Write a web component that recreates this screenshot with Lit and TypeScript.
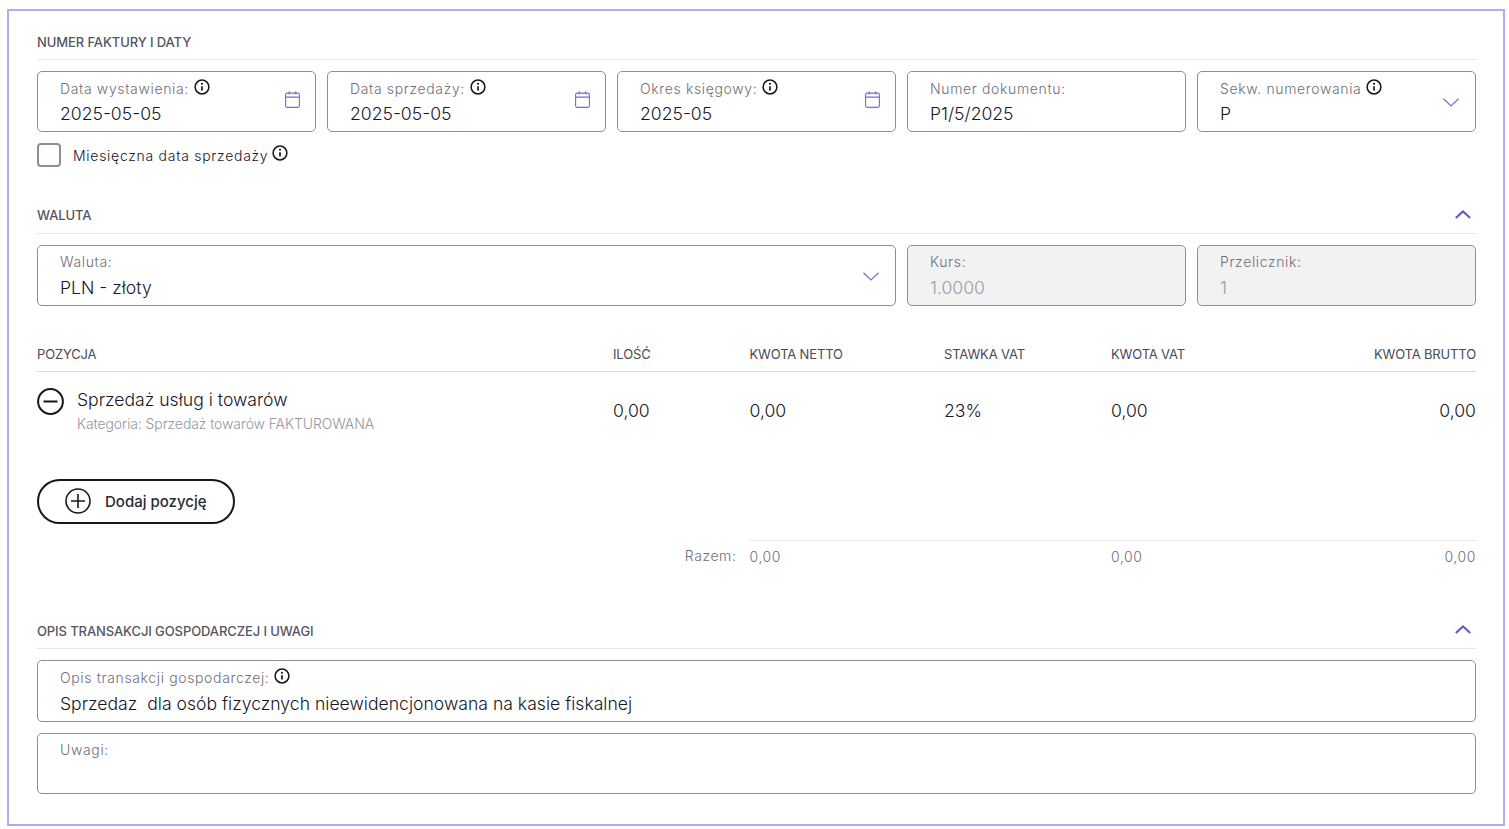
import { LitElement, html, css } from "lit";
import { customElement } from "lit/decorators.js";

const info = html`<svg class="info" viewBox="0 0 16 16" fill="none" stroke="#17171f" stroke-width="1.5"><circle cx="8" cy="8" r="6.9"/><path d="M8 7.2v4.2" stroke-width="1.7"/><circle cx="8" cy="4.8" r="1.05" fill="#17171f" stroke="none"/></svg>`;
const cal = html`<svg class="side cal" viewBox="0 0 15 17" fill="none" stroke="#7d68d8" stroke-width="1.1"><rect x="0.6" y="2.1" width="13.8" height="14.3" rx="1.6"/><path d="M0.6 6.1h13.8M4.2 0.2v3.2M10.8 0.2v3.2"/></svg>`;
const down = html`<svg class="side chev" viewBox="0 0 16 9" fill="none" stroke="#7d68d8" stroke-width="1.2"><path d="M0.5 0.8 8 8l7.5-7.2"/></svg>`;
const up = html`<svg class="up" viewBox="0 0 16 9" fill="none" stroke="#6a53d0" stroke-width="2"><path d="M0.8 8 8 1.4 15.2 8"/></svg>`;

@customElement("app-root")
export class AppRoot extends LitElement {
  static styles = css`
    :host { display: block; padding: 9px 4px 3px 7px; font-family: Inter, "Liberation Sans", sans-serif; color: #17171f; background: #fff; }
    .frame { border: 2px solid #b7a9f0; height: 817px; box-sizing: border-box; padding: 19px 27px 0 28px; }
    .head { display: flex; justify-content: space-between; align-items: center; height: 30px; box-sizing: border-box; border-bottom: 1px solid #e6e6e9; font-size: 13px; letter-spacing: -0.1px; font-weight: 500; color: #55555e; padding-bottom: 5px; }
    .s2 span { margin-top: -2px; }
    .up { width: 16px; height: 9px; margin-right: 5px; margin-top: -4px; }
    .grid { display: grid; grid-template-columns: repeat(5, 1fr); gap: 11px; margin-top: 11px; }
    .field { position: relative; height: 61px; box-sizing: border-box; border: 1px solid #8f8d9b; border-radius: 5px; padding: 7px 22px 0; }
    .wide { grid-column: span 3; }
    .off { background: #f2f2f2; }
    .nudge { padding-top: 6px; }
    .nudge .val { margin-top: 5px; }
    .lab { display: flex; align-items: center; gap: 5px; height: 18px; font-size: 14px; font-weight: 300; letter-spacing: 0.64px; color: #6f6f7a; white-space: nowrap; }
    .val { font-size: 17.6px; font-weight: 300; line-height: 26px; margin-top: 4px; white-space: pre; color: #17171f; }
    .off .val { color: #9c9ca5; }
    .info { width: 16px; height: 16px; flex: none; margin-top: -2px; }
    .side { position: absolute; }
    .cal { right: 15px; top: 19px; width: 15px; height: 17px; }
    .chev { right: 16px; top: 26px; width: 16px; height: 9px; }
    .check { display: flex; align-items: center; margin-top: 11px; height: 24px; font-size: 14px; font-weight: 300; letter-spacing: 0.72px; gap: 4px; }
    .check .info { margin-top: -4px; }
    .box { width: 24px; height: 24px; box-sizing: border-box; border: 2px solid #8f8d9b; border-radius: 4px; margin-right: 8px; }
    .s2 { margin-top: 37px; }
    .cols { display: grid; grid-template-columns: 576px 136.5px 194.5px 167px 1fr; }
    .thead { margin-top: 34px; height: 32px; border-bottom: 1px solid #dedee2; box-sizing: border-box; font-size: 13px; font-weight: 400; letter-spacing: -0.15px; color: #4a4a53; align-items: center; padding-bottom: 3px; }
    .pair { display: flex; justify-content: space-between; }
    .r { text-align: right; }
    .row { height: 78px; font-size: 17.6px; font-weight: 300; padding-top: 16px; box-sizing: border-box; align-items: start; }
    .num { padding-top: 12px; line-height: 22px; }
    .pos { display: flex; gap: 13px; }
    .minus { width: 27px; height: 27px; flex: none; }
    .name { line-height: 24px; }
    .sub { font-size: 14px; font-weight: 300; color: #96969f; line-height: 18px; margin-top: 3px; white-space: nowrap; letter-spacing: -0.1px; }
    .btn { display: inline-flex; align-items: center; gap: 14px; width: 198px; height: 45px; box-sizing: border-box; border: 2px solid #17171f; border-radius: 23px; padding: 0 0 1px 26px; margin-top: 29px; font-size: 15px; font-weight: 500; color: #2a2a33; background: #fff; font-family: inherit; }
    .btn svg { width: 26px; height: 26px; flex: none; }
    .tot { margin-top: 16px; font-size: 14px; font-weight: 300; color: #6f6f7a; }
    .razemc { grid-column: 1 / 3; padding-top: 7px; text-align: right; padding-right: 13px; letter-spacing: 0.6px; }
    .totline { grid-column: 3 / 6; display: grid; grid-template-columns: 361.5px 1fr 1fr; border-top: 1px solid #e6e6e9; padding-top: 7px; letter-spacing: 0.6px; }
    .s3 { margin-top: 54px; }
    .g1 { display: grid; gap: 11px; margin-top: 11px; }
    .tall { height: 62px; }
    .tall .val { margin-top: 5px; }
  `;

  field(label: string, value: string, opts: { i?: boolean; side?: unknown; cls?: string } = {}) {
    return html`<div class="field ${opts.cls ?? ""}">
      <div class="lab">${label}${opts.i ? info : ""}</div>
      <div class="val">${value}</div>
      ${opts.side ?? ""}
    </div>`;
  }

  render() {
    return html`<div class="frame">
      <div class="head"><span>NUMER FAKTURY I DATY</span></div>
      <div class="grid">
        ${this.field("Data wystawienia:", "2025-05-05", { i: true, side: cal })}
        ${this.field("Data sprzedaży:", "2025-05-05", { i: true, side: cal })}
        ${this.field("Okres księgowy:", "2025-05", { i: true, side: cal })}
        ${this.field("Numer dokumentu:", "P1/5/2025")}
        ${this.field("Sekw. numerowania", "P", { i: true, side: down })}
      </div>
      <div class="check"><span class="box"></span>Miesięczna data sprzedaży ${info}</div>

      <div class="head s2"><span>WALUTA</span>${up}</div>
      <div class="grid">
        ${this.field("Waluta:", "PLN - złoty", { side: down, cls: "wide nudge" })}
        ${this.field("Kurs:", "1.0000", { cls: "off nudge" })}
        ${this.field("Przelicznik:", "1", { cls: "off nudge" })}
      </div>

      <div class="cols thead">
        <span>POZYCJA</span><span>ILOŚĆ</span><span>KWOTA NETTO</span><span>STAWKA VAT</span>
        <div class="pair"><span>KWOTA VAT</span><span>KWOTA BRUTTO</span></div>
      </div>
      <div class="cols row">
        <div class="pos">
          <svg class="minus" viewBox="0 0 27 27" fill="none" stroke="#17171f" stroke-width="2"><circle cx="13.5" cy="13.5" r="12.4"/><path d="M6.5 13.5h14"/></svg>
          <div><div class="name">Sprzedaż usług i towarów</div><div class="sub">Kategoria: Sprzedaż towarów FAKTUROWANA</div></div>
        </div>
        <div class="num">0,00</div><div class="num">0,00</div><div class="num">23%</div>
        <div class="num pair"><span>0,00</span><span>0,00</span></div>
      </div>
      <button class="btn">
        <svg viewBox="0 0 26 26" fill="none" stroke="#17171f" stroke-width="1.6"><circle cx="13" cy="13" r="12"/><path d="M13 6v14M6 13h14"/></svg>
        Dodaj pozycję
      </button>
      <div class="cols tot">
        <div class="razemc">Razem:</div>
        <div class="totline"><span>0,00</span><span>0,00</span><span class="r">0,00</span></div>
      </div>

      <div class="head s3"><span>OPIS TRANSAKCJI GOSPODARCZEJ I UWAGI</span>${up}</div>
      <div class="g1">
        ${this.field("Opis transakcji gospodarczej:", "Sprzedaz  dla osób fizycznych nieewidencjonowana na kasie fiskalnej", { i: true, cls: "tall" })}
        ${this.field("Uwagi:", "", { cls: "nudge" })}
      </div>
    </div>`;
  }
}
